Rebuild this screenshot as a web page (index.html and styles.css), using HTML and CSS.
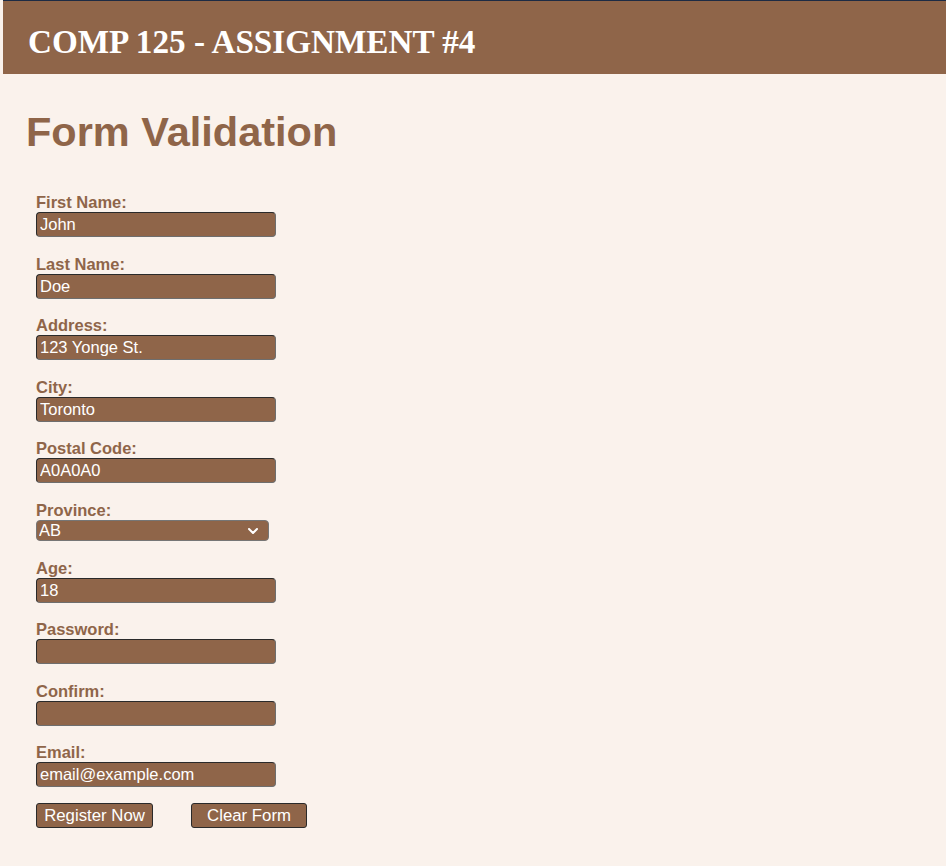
FILE: index.html
```html
<!DOCTYPE html>
<html lang="en">
<head>
<meta charset="utf-8">
<title>COMP 125 - Assignment #4</title>
<link rel="stylesheet" href="styles.css">
</head>
<body>
<header class="banner">
  <h1 class="banner-title">COMP 125 - ASSIGNMENT #4</h1>
</header>
<main class="content">
  <h2 class="page-title">Form Validation</h2>
  <form class="form">
    <div class="field"><label class="label" for="fn">First Name:</label><input class="input" id="fn" type="text" value="John"></div>
    <div class="field"><label class="label" for="ln">Last Name:</label><input class="input" id="ln" type="text" value="Doe"></div>
    <div class="field"><label class="label" for="ad">Address:</label><input class="input" id="ad" type="text" value="123 Yonge St."></div>
    <div class="field"><label class="label" for="ci">City:</label><input class="input" id="ci" type="text" value="Toronto"></div>
    <div class="field"><label class="label" for="pc">Postal Code:</label><input class="input" id="pc" type="text" value="A0A0A0"></div>
    <div class="field"><label class="label" for="pr">Province:</label>
      <div class="select-wrap">
        <select class="select" id="pr"><option>AB</option><option>BC</option><option>MB</option><option>ON</option></select>
        <svg class="chevron" width="10" height="6" viewBox="0 0 10 6"><path d="M1 1 L5 5 L9 1" fill="none" stroke="#fff" stroke-width="2" stroke-linecap="round" stroke-linejoin="round"/></svg>
      </div>
    </div>
    <div class="field"><label class="label" for="ag">Age:</label><input class="input" id="ag" type="text" value="18"></div>
    <div class="field"><label class="label" for="pw">Password:</label><input class="input" id="pw" type="password"></div>
    <div class="field"><label class="label" for="cf">Confirm:</label><input class="input" id="cf" type="password"></div>
    <div class="field"><label class="label" for="em">Email:</label><input class="input" id="em" type="text" value="email@example.com"></div>
    <div class="buttons">
      <button class="btn btn-register" type="button">Register Now</button>
      <button class="btn btn-clear" type="button">Clear Form</button>
    </div>
  </form>
</main>
</body>
</html>
```
FILE: styles.css
```css
html, body {
  margin: 0;
  padding: 0;
  background: #faf2ec;
}
body {
  font-family: "Liberation Sans", Arial, sans-serif;
  padding-left: 3px;
}
.banner {
  background: #8f6549;
  border-top: 1px solid #1d2b44;
  height: 73px;
  display: flex;
  align-items: center;
  padding-left: 25px;
}
.banner-title {
  margin: 0;
  font-family: "Liberation Serif", "Times New Roman", serif;
  font-weight: bold;
  font-size: 33.2px;
  line-height: 40px;
  color: #ffffff;
  padding-top: 8px;
}
.content {
  padding-left: 23px;
}
.page-title {
  margin: 34px 0 0 0;
  font-size: 41.5px;
  line-height: 48px;
  font-weight: bold;
  color: #8f6549;
}
.form {
  margin-top: 37px;
  padding-left: 10px;
  display: flex;
  flex-direction: column;
}
.field {
  display: flex;
  flex-direction: column;
  align-items: flex-start;
  margin-bottom: 17.6px;
}
.label {
  font-size: 16.5px;
  line-height: 18px;
  font-weight: bold;
  color: #8f6549;
  margin-bottom: 1px;
}
.input {
  box-sizing: border-box;
  width: 240px;
  height: 25px;
  margin: 0;
  padding: 0 3px;
  background: #8f6549;
  color: #ffffff;
  border: 1px solid #2a2a2a;
  border-right-color: #6e6e6e;
  border-bottom-color: #6e6e6e;
  border-radius: 4px;
  font-family: "Liberation Sans", Arial, sans-serif;
  font-size: 16.5px;
  outline: none;
}
.select-wrap {
  position: relative;
  width: 233px;
  height: 21px;
}
.select {
  appearance: none;
  -webkit-appearance: none;
  box-sizing: border-box;
  width: 233px;
  height: 21px;
  margin: 0;
  padding: 0 2px;
  background: #8f6549;
  color: #ffffff;
  border: 1px solid #767676;
  border-radius: 4px;
  font-family: "Liberation Sans", Arial, sans-serif;
  font-size: 16.5px;
  line-height: 19px;
  outline: none;
}
.chevron {
  position: absolute;
  right: 11px;
  top: 8px;
  pointer-events: none;
}
.buttons {
  display: flex;
  gap: 38px;
  margin-top: -1.6px;
}
.btn {
  box-sizing: border-box;
  height: 25px;
  margin: 0;
  padding: 0;
  background: #8f6549;
  color: #ffffff;
  border: 1px solid #2a2a2a;
  border-radius: 3px;
  font-family: "Liberation Sans", Arial, sans-serif;
  font-size: 16.8px;
  line-height: 23px;
}
.btn-register {
  width: 117px;
}
.btn-clear {
  width: 116px;
}
```
